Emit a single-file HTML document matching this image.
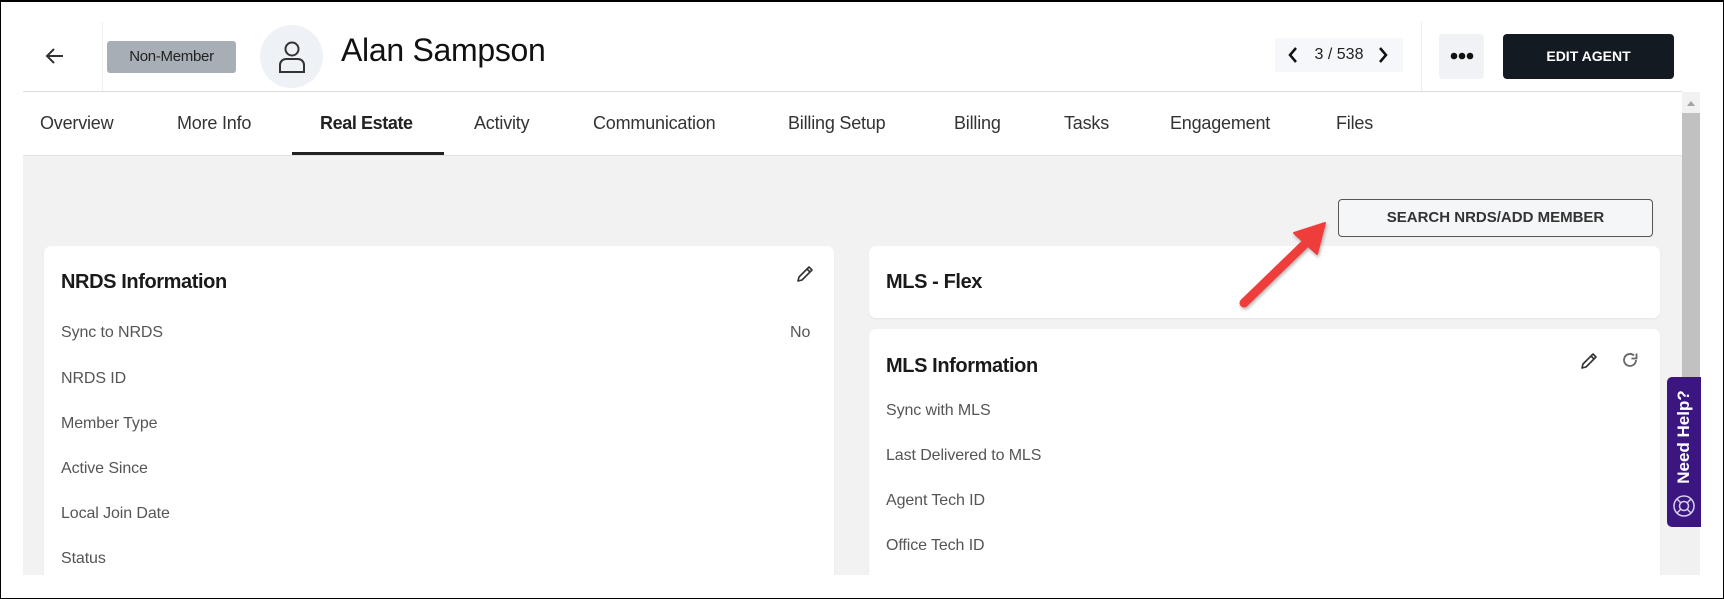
<!DOCTYPE html>
<html><head><meta charset="utf-8"><style>
*{box-sizing:border-box;margin:0;padding:0}
body{width:1724px;height:599px;overflow:hidden;background:#fff;font-family:"Liberation Sans",sans-serif;position:relative}
.frame{position:absolute;left:0;top:0;width:1724px;height:599px;border:1px solid #000;border-top-width:2px}
.a{position:absolute}
.tab{position:absolute;top:113px;font-size:18px;color:#333;white-space:nowrap;letter-spacing:-.2px}
.row{position:absolute;font-size:16px;color:#555;letter-spacing:-.1px}
.card{position:absolute;background:#fff;border-radius:7px;box-shadow:0 1px 2px rgba(0,0,0,.06)}
.title{position:absolute;font-size:20px;font-weight:bold;color:#1a1a1a;letter-spacing:-.4px}
</style></head><body>
<div class="a" style="left:23px;top:91px;width:1659px;height:1px;background:#dcdcdc"></div>
<div class="a" style="left:102px;top:22px;width:1px;height:69px;background:#eee"></div>
<div class="a" style="left:1421px;top:22px;width:1px;height:69px;background:#eee"></div>
<svg class="a" style="left:44px;top:46px" width="22" height="20" viewBox="0 0 22 20"><path d="M19 10H3M10 3L3 10l7 7" fill="none" stroke="#333" stroke-width="2"/></svg>
<div class="a" style="left:107px;top:41px;width:129px;height:32px;background:#a7aeb5;border-radius:3px;font-size:15px;color:#222;text-align:center;line-height:32px;letter-spacing:-.3px">Non-Member</div>
<div class="a" style="left:260px;top:25px;width:63px;height:63px;border-radius:50%;background:#eef2f7"></div>
<svg class="a" style="left:276px;top:40px" width="32" height="34" viewBox="0 0 32 34"><circle cx="16" cy="9" r="6.5" fill="none" stroke="#333" stroke-width="2"/><path d="M4 32V25a6 6 0 0 1 6-6h12a6 6 0 0 1 6 6v7z" fill="none" stroke="#333" stroke-width="2"/></svg>
<div class="a" style="left:341px;top:32px;font-size:32px;color:#111;letter-spacing:-.3px">Alan Sampson</div>
<div class="a" style="left:1275px;top:38px;width:128px;height:34px;background:#f5f7fa;font-size:16px;color:#222;line-height:34px;text-align:center">3 / 538</div>
<svg class="a" style="left:1287px;top:46px" width="12" height="18"><path d="M9 2L3 9l6 7" fill="none" stroke="#111" stroke-width="2.5"/></svg>
<svg class="a" style="left:1377px;top:46px" width="12" height="18"><path d="M3 2l6 7-6 7" fill="none" stroke="#111" stroke-width="2.5"/></svg>
<div class="a" style="left:1439px;top:34px;width:45px;height:45px;background:#f0f2f5;border-radius:3px"></div>
<svg class="a" style="left:1449px;top:51px" width="26" height="10"><circle cx="5" cy="5" r="3.3" fill="#111"/><circle cx="13" cy="5" r="3.3" fill="#111"/><circle cx="21" cy="5" r="3.3" fill="#111"/></svg>
<div class="a" style="left:1503px;top:34px;width:171px;height:45px;background:#141a22;border-radius:4px;color:#fff;font-size:14px;font-weight:bold;text-align:center;line-height:45px">EDIT AGENT</div>

<div class="tab" style="left:40px">Overview</div>
<div class="tab" style="left:177px">More Info</div>
<div class="tab" style="left:320px;font-weight:bold;color:#222;letter-spacing:-.4px">Real Estate</div>
<div class="tab" style="left:474px">Activity</div>
<div class="tab" style="left:593px">Communication</div>
<div class="tab" style="left:788px">Billing Setup</div>
<div class="tab" style="left:954px">Billing</div>
<div class="tab" style="left:1064px">Tasks</div>
<div class="tab" style="left:1170px">Engagement</div>
<div class="tab" style="left:1336px">Files</div>
<div class="a" style="left:292px;top:152px;width:152px;height:3px;background:#222"></div>

<div class="a" style="left:23px;top:155px;width:1659px;height:420px;background:#f2f2f2;border-top:1px solid #e2e2e2"></div>
<div class="a" style="left:1682px;top:92px;width:18px;height:483px;background:#f1f1f1"></div>
<div class="a" style="left:1682px;top:113px;width:18px;height:264px;background:#c1c1c1"></div>
<svg class="a" style="left:1686px;top:99px" width="10" height="8"><path d="M1 7L5 2l4 5z" fill="#a3a3a3"/></svg>

<div class="a" style="left:1338px;top:199px;width:315px;height:38px;border:1px solid #555;border-radius:4px;background:#f5f6f8;font-size:15px;font-weight:bold;color:#333;text-align:center;line-height:36px">SEARCH NRDS/ADD MEMBER</div>

<div class="card" style="left:44px;top:246px;width:790px;height:340px"></div>
<div class="title" style="left:61px;top:271px">NRDS Information</div>
<svg class="a" style="left:795px;top:264px" width="20" height="20" viewBox="0 0 20 20"><path d="M3 17l1-4L14 3l3 3L7 16z M12 5l3 3" fill="none" stroke="#333" stroke-width="1.6" stroke-linejoin="round"/></svg>
<div class="row" style="left:61px;top:324px">Sync to NRDS</div>
<div class="row" style="left:790px;top:324px">No</div>
<div class="row" style="left:61px;top:370px">NRDS ID</div>
<div class="row" style="left:61px;top:415px">Member Type</div>
<div class="row" style="left:61px;top:460px">Active Since</div>
<div class="row" style="left:61px;top:505px">Local Join Date</div>
<div class="row" style="left:61px;top:550px">Status</div>

<div class="card" style="left:869px;top:246px;width:791px;height:72px"></div>
<div class="title" style="left:886px;top:271px">MLS - Flex</div>
<div class="card" style="left:869px;top:329px;width:791px;height:260px"></div>
<div class="title" style="left:886px;top:355px">MLS Information</div>
<svg class="a" style="left:1579px;top:351px" width="20" height="20" viewBox="0 0 20 20"><path d="M3 17l1-4L14 3l3 3L7 16z M12 5l3 3" fill="none" stroke="#333" stroke-width="1.6" stroke-linejoin="round"/></svg>
<svg class="a" style="left:1620px;top:350px" width="20" height="20" viewBox="0 0 20 20"><path d="M16 10a6 6 0 1 1-2-4.5" fill="none" stroke="#666" stroke-width="1.8"/><path d="M11.5 3.5h5v-5" transform="translate(0,5)" fill="none" stroke="#666" stroke-width="1.8"/></svg>
<div class="row" style="left:886px;top:402px">Sync with MLS</div>
<div class="row" style="left:886px;top:447px">Last Delivered to MLS</div>
<div class="row" style="left:886px;top:492px">Agent Tech ID</div>
<div class="row" style="left:886px;top:537px">Office Tech ID</div>
<div class="a" style="left:0;top:575px;width:1724px;height:24px;background:#fff"></div>

<div class="a" style="left:1667px;top:377px;width:34px;height:150px;background:#3b1680;border-radius:5px 0 0 5px"></div>
<div class="a" style="left:1684px;top:437px;transform:translate(-50%,-50%) rotate(-90deg);color:#fff;font-weight:bold;font-size:17px;white-space:nowrap">Need Help?</div>
<svg class="a" style="left:1672px;top:494px" width="24" height="24" viewBox="0 0 24 24" fill="none" stroke="#d8cfee" stroke-width="1.5"><circle cx="12" cy="12" r="10"/><circle cx="12" cy="12" r="4.5"/><path d="M5 5l4 4M19 5l-4 4M5 19l4-4M19 19l-4-4"/></svg>

<svg class="a" style="left:0;top:0" width="1724" height="599">
<defs><filter id="s" x="-20%" y="-20%" width="140%" height="140%"><feDropShadow dx="1" dy="2" stdDeviation="1.5" flood-opacity=".3"/></filter></defs>
<g filter="url(#s)"><path d="M1244 303L1306 243" stroke="#ef3e3a" stroke-width="9" stroke-linecap="round"/><path d="M1325 223L1294 233L1317 254z" fill="#ef3e3a" stroke="#ef3e3a" stroke-width="2" stroke-linejoin="round"/></g>
</svg>
<div class="frame"></div>
</body></html>
